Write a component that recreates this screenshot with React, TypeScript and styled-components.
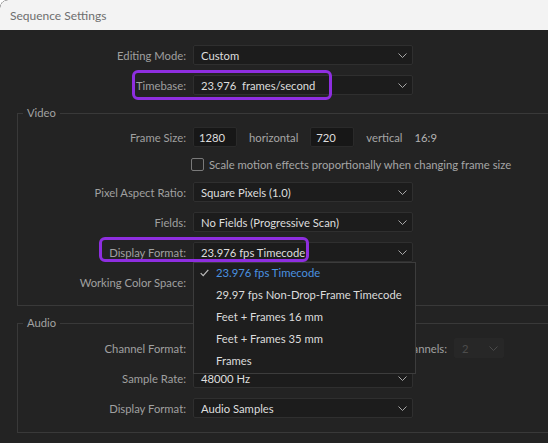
import React from 'react';
import styled, { createGlobalStyle } from 'styled-components';

const Global = createGlobalStyle`
  html, body { margin: 0; padding: 0; background: #ffffff; }
  body {
    width: 548px; height: 443px; overflow: hidden;
    font-family: Lato, "Noto Sans", sans-serif;
  }
  * { box-sizing: border-box; }
`;

const Window = styled.div`
  width: 548px;
  height: 443px;
  background: #232323;
  display: flex;
  flex-direction: column;
  overflow: hidden;
  border-top-left-radius: 8px;
`;

const TitleBar = styled.div`
  height: 30px;
  flex: 0 0 30px;
  background: #f3f3f3;
  display: flex;
  align-items: center;
  padding-left: 10px;
  font-size: 12px;
  color: #6e6e6e;
  border-top-left-radius: 8px;
`;

const Body = styled.div`
  padding-top: 14px;
  display: flex;
  flex-direction: column;
  font-size: 11.25px;
  color: #dcdcdc;
`;

const Section = styled.div<{ $framed?: boolean; $mt?: number; $pt?: number; $pb?: number }>`
  position: relative;
  margin-left: 17px;
  margin-right: -30px;
  margin-top: ${p => p.$mt ?? 0}px;
  padding-top: ${p => p.$pt ?? 0}px;
  padding-bottom: ${p => p.$pb ?? 0}px;
  border: 1px solid ${p => (p.$framed ? '#393939' : 'transparent')};
  display: flex;
  flex-direction: column;
  gap: 10px;
`;

const GroupTitle = styled.div`
  position: absolute;
  top: -10px;
  left: 5px;
  padding: 0 4px;
  background: #232323;
  color: #a2a2a2;
  line-height: 18px;
`;

const Row = styled.div<{ $h?: number }>`
  position: relative;
  display: grid;
  grid-template-columns: 168px auto;
  column-gap: 7px;
  align-items: center;
  height: ${p => p.$h ?? 20}px;
`;

const Label = styled.div`
  text-align: right;
  color: #a0a0a0;
  white-space: nowrap;
`;

const Fields = styled.div`
  display: flex;
  align-items: center;
  gap: 12px;
  white-space: nowrap;
`;

const SelectBox = styled.div<{ $w?: number; $disabled?: boolean }>`
  width: ${p => p.$w ?? 220}px;
  height: 20px;
  background: ${p => (p.$disabled ? '#272727' : '#1c1c1c')};
  border: 1px solid ${p => (p.$disabled ? '#272727' : '#2f2f2f')};
  border-radius: 2px;
  display: flex;
  align-items: center;
  justify-content: space-between;
  padding: 0 5px 0 7px;
  color: ${p => (p.$disabled ? '#4c4c4c' : '#dedede')};
  white-space: pre;
`;

const NumInput = styled.div`
  width: 44px;
  height: 20px;
  background: #171717;
  border: 1px solid #2a2a2a;
  border-radius: 2px;
  display: flex;
  align-items: center;
  padding-left: 5px;
  color: #dedede;
`;

const Unit = styled.span<{ $light?: boolean }>`
  color: ${p => (p.$light ? '#b4b4b4' : '#a6a6a6')};
`;

const CheckRow = styled.div`
  display: flex;
  align-items: center;
  gap: 5px;
  margin-left: -2px;
  color: #a6a6a6;
  white-space: nowrap;
`;

const CheckBox = styled.span`
  width: 13px;
  height: 13px;
  border: 1.5px solid #7a7a7a;
  border-radius: 2px;
  flex: 0 0 13px;
`;

const Highlight = styled.div<{ $l: number; $t: number; $w: number; $h: number }>`
  position: absolute;
  left: ${p => p.$l}px;
  top: ${p => p.$t}px;
  width: ${p => p.$w}px;
  height: ${p => p.$h}px;
  border: 3px solid #8e2ee0;
  border-radius: 6px;
  pointer-events: none;
  z-index: 5;
`;

const Menu = styled.div`
  position: absolute;
  left: 175px;
  top: 20px;
  width: 223px;
  background: #1e1e1e;
  border: 1px solid #3c3c3c;
  z-index: 10;
  display: flex;
  flex-direction: column;
`;

const MenuItem = styled.div<{ $active?: boolean }>`
  position: relative;
  height: 22px;
  line-height: 20px;
  padding-left: 22px;
  color: ${p => (p.$active ? '#4a92e0' : '#dcdcdc')};
  white-space: nowrap;
`;

const Check = styled.svg`
  position: absolute;
  left: 6px;
  top: 6px;
`;

const ChannelsLabel = styled.div`
  width: 122px;
  text-align: right;
  color: #a0a0a0;
  margin-right: -5px;
`;

const Chevron = ({ color = '#a8a8a8' }: { color?: string }) => (
  <svg width="9" height="5" viewBox="0 0 9 5">
    <path d="M0.5 0.5 L4.5 4.5 L8.5 0.5" fill="none" stroke={color} strokeWidth="1" />
  </svg>
);

const Select = ({ value, w, disabled }: { value: string; w?: number; disabled?: boolean }) => (
  <SelectBox $w={w} $disabled={disabled}>
    <span>{value}</span>
    <Chevron color={disabled ? '#4a4a4a' : '#a8a8a8'} />
  </SelectBox>
);

const menuItems = [
  '23.976 fps Timecode',
  '29.97 fps Non-Drop-Frame Timecode',
  'Feet + Frames 16 mm',
  'Feet + Frames 35 mm',
  'Frames',
];

export default function App() {
  return (
    <>
      <Global />
      <Window>
        <TitleBar>Sequence Settings</TitleBar>
        <Body>
          <Section>
            <Row>
              <Label>Editing Mode:</Label>
              <Select value="Custom" />
            </Row>
            <Row>
              <Highlight $l={114} $t={-5} $w={200} $h={30} />
              <Label>Timebase:</Label>
              <Select value="23.976  frames/second" />
            </Row>
          </Section>

          <Section $framed $mt={17} $pt={13} $pb={13}>
            <GroupTitle>Video</GroupTitle>
            <Row>
              <Label>Frame Size:</Label>
              <Fields>
                <NumInput>1280</NumInput>
                <Unit>horizontal</Unit>
                <NumInput>720</NumInput>
                <Unit>vertical</Unit>
                <Unit $light>16:9</Unit>
              </Fields>
            </Row>
            <Row $h={15}>
              <span />
              <CheckRow>
                <CheckBox />
                <span>Scale motion effects proportionally when changing frame size</span>
              </CheckRow>
            </Row>
            <Row>
              <Label>Pixel Aspect Ratio:</Label>
              <Select value="Square Pixels (1.0)" />
            </Row>
            <Row>
              <Label>Fields:</Label>
              <Select value="No Fields (Progressive Scan)" />
            </Row>
            <Row>
              <Highlight $l={81} $t={-5} $w={210} $h={25} />
              <Label>Display Format:</Label>
              <Select value="23.976 fps Timecode" />
              <Menu>
                {menuItems.map((m, i) => (
                  <MenuItem key={m} $active={i === 0}>
                    {i === 0 && (
                      <Check width="9" height="8" viewBox="0 0 9 8">
                        <path d="M0.7 4.2 L3.2 6.7 L8.3 0.8" fill="none" stroke="#bdbdbd" strokeWidth="1.2" />
                      </Check>
                    )}
                    {m}
                  </MenuItem>
                ))}
              </Menu>
            </Row>
            <Row>
              <Label>Working Color Space:</Label>
              <span />
            </Row>
          </Section>

          <Section $framed $mt={17} $pt={14} $pb={14}>
            <GroupTitle>Audio</GroupTitle>
            <Row>
              <Label>Channel Format:</Label>
              <Fields>
                <Select value="" w={120} />
                <ChannelsLabel>Number of Channels:</ChannelsLabel>
                <Select value="2" w={50} disabled />
              </Fields>
            </Row>
            <Row>
              <Label>Sample Rate:</Label>
              <Select value="48000 Hz" />
            </Row>
            <Row>
              <Label>Display Format:</Label>
              <Select value="Audio Samples" />
            </Row>
          </Section>
        </Body>
      </Window>
    </>
  );
}
